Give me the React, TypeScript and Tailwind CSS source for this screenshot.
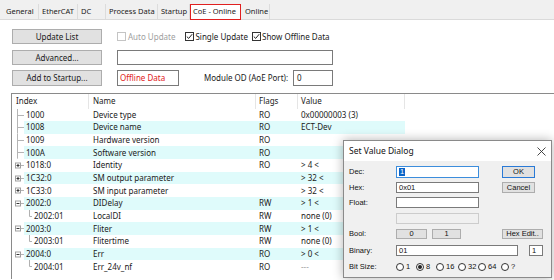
import React from 'react';

type Tree = 'line' | 'plus' | 'minus' | 'child';

const rows: { idx: string; name: string; flags: string; value: string; tree: Tree }[] = [
  { idx: '1000', name: 'Device type', flags: 'RO', value: '0x00000003 (3)', tree: 'line' },
  { idx: '1008', name: 'Device name', flags: 'RO', value: 'ECT-Dev', tree: 'line' },
  { idx: '1009', name: 'Hardware version', flags: 'RO', value: '', tree: 'line' },
  { idx: '100A', name: 'Software version', flags: 'RO', value: '', tree: 'line' },
  { idx: '1018:0', name: 'Identity', flags: 'RO', value: '> 4 <', tree: 'plus' },
  { idx: '1C32:0', name: 'SM output parameter', flags: '', value: '> 32 <', tree: 'plus' },
  { idx: '1C33:0', name: 'SM input parameter', flags: '', value: '> 32 <', tree: 'plus' },
  { idx: '2002:0', name: 'DIDelay', flags: 'RW', value: '> 1 <', tree: 'minus' },
  { idx: '2002:01', name: 'LocalDI', flags: 'RW', value: 'none (0)', tree: 'child' },
  { idx: '2003:0', name: 'Fliter', flags: 'RW', value: '> 1 <', tree: 'minus' },
  { idx: '2003:01', name: 'Flitertime', flags: 'RW', value: 'none (0)', tree: 'child' },
  { idx: '2004:0', name: 'Err', flags: 'RO', value: '> 0 <', tree: 'minus' },
  { idx: '2004:01', name: 'Err_24v_nf', flags: 'RO', value: '---', tree: 'child' },
];

const tabs = [
  { label: 'General', w: 'w-[36px]' },
  { label: 'EtherCAT', w: 'w-[39px]' },
  { label: 'DC', w: 'w-[28px]' },
  { label: 'Process Data', w: 'w-[52px]' },
  { label: 'Startup', w: 'w-[32px]' },
];

const Checkbox = ({ checked, disabled }: { checked?: boolean; disabled?: boolean }) => (
  <span
    className={
      'w-[9px] h-[9px] border bg-white flex items-center justify-center shrink-0 ' +
      (disabled ? 'border-[#c4c4c4]' : 'border-[#333333]')
    }
  >
    {checked && (
      <svg width="7" height="7" viewBox="0 0 7 7">
        <path d="M0.8 3.6 L2.7 5.4 L6.2 1.2" fill="none" stroke="#222" strokeWidth="1" />
      </svg>
    )}
  </span>
);

const TreeMark = ({ tree }: { tree: Tree }) => {
  if (tree === 'child') {
    return (
      <svg width="20" height="12.67" viewBox="0 0 20 12.67" className="shrink-0">
        <path d="M17.5 0 V6.5 H20" fill="none" stroke="#b0b0b0" strokeWidth="1" />
      </svg>
    );
  }
  return (
    <svg width="12" height="12.67" viewBox="0 0 12 12.67" className="shrink-0">
      {tree === 'line' ? (
        <path d="M5.5 0 V12.67 M5.5 6.5 H12" fill="none" stroke="#b4b4b4" strokeWidth="1" />
      ) : (
        <>
          <path d="M8 6.5 H12" fill="none" stroke="#b4b4b4" strokeWidth="1" />
          <rect x="3.5" y="4" width="5" height="5" fill="white" stroke="#a0a0a0" strokeWidth="1" />
          <path d={tree === 'plus' ? 'M4.5 6.5 H7.5 M6 5 V8' : 'M4.5 6.5 H7.5'} stroke="#333" strokeWidth="1" />
        </>
      )}
    </svg>
  );
};

const Radio = ({ checked, label, w }: { checked?: boolean; label: string; w: string }) => (
  <span className={w + ' flex items-center gap-[2px]'}>
    <span className="w-[8px] h-[8px] rounded-full border border-[#333] bg-white flex items-center justify-center">
      {checked && <span className="w-[4px] h-[4px] rounded-full bg-[#222]" />}
    </span>
    <span>{label}</span>
  </span>
);

const SetValueDialog = () => (
  <div className="absolute left-[343px] top-[140px] w-[209px] h-[138px] border border-[#8a8a8a] bg-[#f0f0f0] shadow-[0_0_10px_rgba(0,0,0,0.3)] font-['Liberation_Sans'] text-[7.5px] text-[#111]">
    <div className="h-[20px] bg-white flex items-center justify-between pl-[5px] pr-[5px] font-['Noto_Sans'] text-[8.5px]">
      <span>Set Value Dialog</span>
      <svg width="9" height="9" viewBox="0 0 9 9">
        <path d="M0.5 0.5 L8.5 8.5 M8.5 0.5 L0.5 8.5" stroke="#333" strokeWidth="0.9" />
      </svg>
    </div>
    <div className="pl-[5px] pt-[5px] flex flex-col">
      <div className="flex items-center h-[12px]">
        <span className="w-[47px]">Dec:</span>
        <span className="w-[83px] h-[12px] border border-[#3c8ddc] bg-white flex items-center pl-[2px]">
          <span className="bg-[#0a64c8] text-white px-[1px]">1</span>
        </span>
        <span className="ml-[23px] w-[33px] h-[12px] border border-[#2a7ad6] bg-[#e1e1e1] flex items-center justify-center">OK</span>
      </div>
      <div className="flex items-center h-[11px] mt-[4px]">
        <span className="w-[47px]">Hex:</span>
        <span className="w-[83px] h-[11px] border border-[#7a7a7a] bg-white flex items-center pl-[2px]">0x01</span>
        <span className="ml-[23px] w-[33px] h-[11px] border border-[#adadad] bg-[#e1e1e1] flex items-center justify-center">Cancel</span>
      </div>
      <div className="flex items-center h-[11px] mt-[4px]">
        <span className="w-[47px]">Float:</span>
        <span className="w-[83px] h-[11px] border border-[#7a7a7a] bg-white" />
      </div>
      <div className="flex items-center h-[11px] mt-[5px]">
        <span className="w-[47px]" />
        <span className="w-[83px] h-[11px] border border-[#cccccc] bg-[#f0f0f0]" />
      </div>
      <div className="flex items-center h-[10px] mt-[5px]">
        <span className="w-[47px]">Bool:</span>
        <span className="w-[31px] h-[10px] border border-[#adadad] bg-[#e1e1e1] flex items-center justify-center">0</span>
        <span className="ml-[5px] w-[29px] h-[10px] border border-[#adadad] bg-[#e1e1e1] flex items-center justify-center">1</span>
        <span className="ml-[41px] w-[41px] h-[10px] border border-[#adadad] bg-[#e1e1e1] flex items-center justify-center">Hex Edit..</span>
      </div>
      <div className="flex items-center h-[11px] mt-[6px]">
        <span className="w-[47px]">Binary:</span>
        <span className="w-[122px] h-[11px] border border-[#7a7a7a] bg-white flex items-center pl-[2px]">01</span>
        <span className="ml-[11px] w-[14px] h-[11px] border border-[#7a7a7a] bg-white flex items-center pl-[2px]">1</span>
      </div>
      <div className="flex items-center h-[11px] mt-[5px]">
        <span className="w-[47px]">Bit Size:</span>
        <Radio w="w-[20px]" label="1" />
        <Radio w="w-[20px]" checked label="8" />
        <Radio w="w-[22px]" label="16" />
        <Radio w="w-[20px]" label="32" />
        <Radio w="w-[23px]" label="64" />
        <Radio w="w-[16px]" label="?" />
      </div>
    </div>
  </div>
);

export default function App() {
  return (
    <div className="w-[554px] h-[280px] bg-white relative overflow-hidden font-['Noto_Sans'] text-[8px] text-[#1a1a1a] leading-none whitespace-nowrap">
      <div className="h-[20px] bg-[#f0f0f0] border-b border-[#dadada] flex items-end pl-[3px] text-[7.5px]">
        {tabs.map((t) => (
          <div key={t.label} className={t.w + ' h-[15px] border-r border-[#dcdcdc] flex items-center pl-[3px]'}>
            {t.label}
          </div>
        ))}
        <div className="w-[51px] h-[16px] border-[1.5px] border-[#e02020] bg-white flex items-center pl-[2px] mb-[-1px]">
          CoE - Online
        </div>
        <div className="w-[29px] h-[15px] border-r border-[#dcdcdc] flex items-center pl-[4px]">Online</div>
      </div>

      <div className="pl-[12px] pt-[9px] flex flex-col">
        <div className="flex items-center h-[15px]">
          <button className="w-[90px] h-[15px] bg-[#e1e1e1] border border-[#adadad]">Update List</button>
          <span className="ml-[15px] flex items-center gap-[2px] text-[#a0a0a0]">
            <Checkbox disabled />
            Auto Update
          </span>
          <span className="ml-[10px] flex items-center gap-[1px]">
            <Checkbox checked />
            Single Update
          </span>
          <span className="ml-[4px] flex items-center gap-[1px]">
            <Checkbox checked />
            Show Offline Data
          </span>
        </div>
        <div className="flex items-center h-[15px] mt-[6px]">
          <button className="w-[90px] h-[15px] bg-[#e1e1e1] border border-[#adadad]">Advanced...</button>
          <span className="ml-[15px] w-[216px] h-[15px] border border-[#7a7a7a] bg-white" />
        </div>
        <div className="flex items-center h-[16px] mt-[5px]">
          <button className="w-[90px] h-[16px] bg-[#e1e1e1] border border-[#adadad]">Add to Startup...</button>
          <span className="ml-[15px] w-[62px] h-[16px] border border-[#7a7a7a] bg-white text-[#e02020] flex items-center pl-[2px]">
            Offline Data
          </span>
          <span className="ml-[25px]">Module OD (AoE Port):</span>
          <span className="ml-auto mr-[221px] w-[40px] h-[16px] border border-[#7a7a7a] bg-white flex items-center pl-[3px]">0</span>
        </div>
      </div>

      <div className="ml-[11px] mt-[7px] border-l border-t border-[#8a8a8a] h-[186px]">
        <div className="flex h-[14.5px] items-center">
          <div className="w-[77px] h-full border-r border-[#e5e5e5] flex items-center pl-[4px]">Index</div>
          <div className="w-[167px] h-full border-r border-[#e5e5e5] flex items-center pl-[4px]">Name</div>
          <div className="w-[42px] h-full border-r border-[#e5e5e5] flex items-center pl-[3px]">Flags</div>
          <div className="w-[107px] h-full border-r border-[#e5e5e5] flex items-center pl-[3px]">Value</div>
        </div>
        {rows.map((r, i) => (
          <div key={r.idx} className="flex h-[12.67px]">
            <TreeMark tree={r.tree} />
            <div className={'flex items-center ' + (i % 2 === 1 ? 'bg-[#dffbfb]' : '')}>
              <div className={(r.tree === 'child' ? 'w-[57px]' : 'w-[65px]') + ' pl-[2px]'}>{r.idx}</div>
              <div className="w-[167px] pl-[4px]">{r.name}</div>
              <div className="w-[42px] pl-[3px]">{r.flags}</div>
              <div className={'w-[107px] pl-[3px] ' + (r.value === '---' ? 'text-[#a0a0a0]' : '')}>{r.value}</div>
            </div>
          </div>
        ))}
      </div>

      <SetValueDialog />
    </div>
  );
}
